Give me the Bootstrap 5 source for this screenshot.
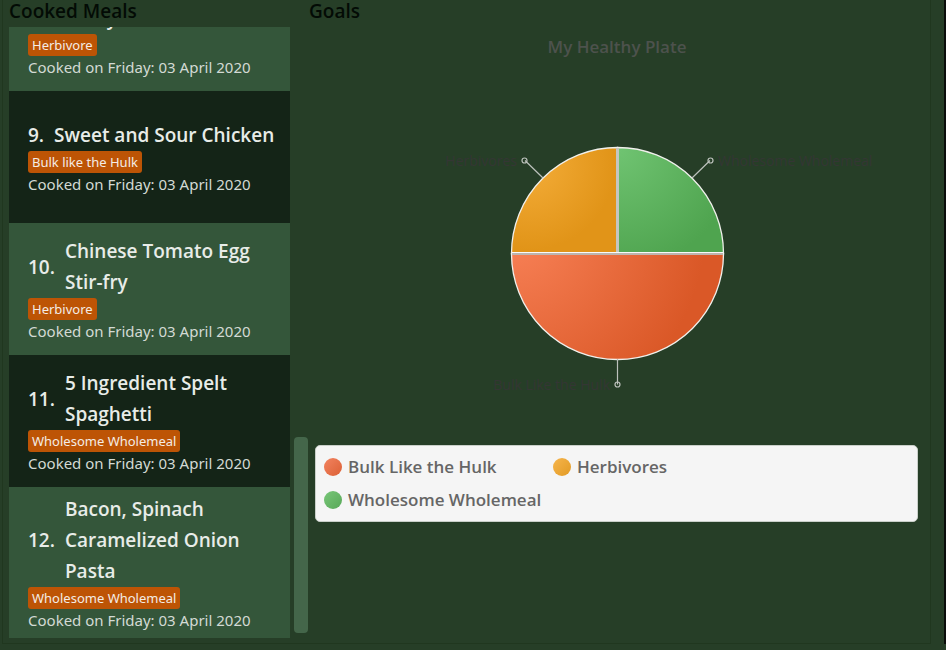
<!DOCTYPE html>
<html lang="en">
<head>
<meta charset="utf-8">
<meta name="viewport" content="width=device-width, initial-scale=1">
<title>Cooked Meals and Goals</title>
<link href="https://cdn.jsdelivr.net/npm/bootstrap@5.3.0/dist/css/bootstrap.min.css" rel="stylesheet">
<style>
body { background: #263e27; font-family: "Segoe UI", "Open Sans", "Noto Sans", sans-serif; border-right: 2px solid #0a0d0a; }
.board { height: calc(100vh - 6px); margin: 0 13px 0 2px; padding: 0 5px 5px 6px; border: 1px solid #20371f; border-top: 0; display: grid; grid-template-columns: 300px minmax(0, 1fr); }
.section-title { font-size: 19px; line-height: 22px; font-weight: 600; color: #030b05; margin: 0 0 5px; }
.meals { list-style: none; justify-content: flex-end; }
.meal { min-height: 132px; padding: 7px 6px 6px 19px; background: #34563a; color: #e8ece8; flex-shrink: 0; }
.meal:nth-child(even) { background: #142417; }
.meal-name { font-size: 19px; line-height: 31px; font-weight: 600; gap: 10px; }
.tag { background: #bd5405; color: #f4ece6; font-family: "Segoe UI", "Noto Sans", sans-serif; font-size: 13px; line-height: 22px; padding: 0 4px; border-radius: 3px; }
.cooked { font-family: "Segoe UI", "Noto Sans", sans-serif; font-size: 15px; line-height: 23px; color: #d3dad4; }
.thumb { width: 14px; height: 32%; margin: 0 1px 5px 4px; border-radius: 4px; background: #44664a; }
.chart-title { font-size: 17px; line-height: 24px; font-weight: 600; color: #4d524d; margin: 13px 0 0; }
.chart { height: 386px; overflow: visible; }
.chart text { font-size: 14px; fill: #343634; }
.legend-box { margin: 0 7px 0 6px; padding: 4px 8px 5px; background: #f5f5f5; border: 1px solid #c9cfc9; border-radius: 5px; color: #666; font-size: 17px; font-weight: 600; }
.legend-entry { flex: 0 0 229px; height: 33px; gap: 6px; }
.dot { width: 18px; height: 18px; border-radius: 50%; flex: none; }
.dot-hulk { background: linear-gradient(135deg, #f28360, #dc6035); }
.dot-herb { background: linear-gradient(135deg, #f6b54c, #e29a24); }
.dot-whole { background: linear-gradient(135deg, #78c678, #58a858); }
</style>
</head>
<body>
<main class="board">
  <section class="d-flex flex-column h-100 overflow-hidden">
    <h2 class="section-title">Cooked Meals</h2>
    <div class="d-flex flex-grow-1 overflow-hidden">
      <ol class="meals d-flex flex-column flex-grow-1 overflow-hidden p-0 m-0">
        <li class="meal d-flex flex-column justify-content-center align-items-start">
          <div class="meal-name d-flex align-items-center"><span>8.</span><span>Vegetable<br>Stir-fry</span></div>
          <span class="tag">Herbivore</span><span class="cooked">Cooked on Friday: 03 April 2020</span>
        </li>
        <li class="meal d-flex flex-column justify-content-center align-items-start">
          <div class="meal-name d-flex align-items-center"><span>9.</span><span>Sweet and Sour Chicken</span></div>
          <span class="tag">Bulk like the Hulk</span><span class="cooked">Cooked on Friday: 03 April 2020</span>
        </li>
        <li class="meal d-flex flex-column justify-content-center align-items-start">
          <div class="meal-name d-flex align-items-center"><span>10.</span><span>Chinese Tomato Egg Stir-fry</span></div>
          <span class="tag">Herbivore</span><span class="cooked">Cooked on Friday: 03 April 2020</span>
        </li>
        <li class="meal d-flex flex-column justify-content-center align-items-start">
          <div class="meal-name d-flex align-items-center"><span>11.</span><span>5 Ingredient Spelt Spaghetti</span></div>
          <span class="tag">Wholesome Wholemeal</span><span class="cooked">Cooked on Friday: 03 April 2020</span>
        </li>
        <li class="meal d-flex flex-column justify-content-center align-items-start">
          <div class="meal-name d-flex align-items-center"><span>12.</span><span>Bacon, Spinach Caramelized Onion Pasta</span></div>
          <span class="tag">Wholesome Wholemeal</span><span class="cooked">Cooked on Friday: 03 April 2020</span>
        </li>
      </ol>
      <div class="thumb align-self-end flex-shrink-0" aria-hidden="true"></div>
    </div>
  </section>
  <section>
    <h2 class="section-title">Goals</h2>
    <h3 class="chart-title text-center">My Healthy Plate</h3>
    <svg class="chart d-block w-100" viewBox="309 59 616 386" role="img" aria-label="My Healthy Plate pie chart">
      <defs>
        <radialGradient id="gHulk" gradientUnits="userSpaceOnUse" cx="512" cy="230" r="215"><stop offset="0" stop-color="#f98258"/><stop offset=".9" stop-color="#da5827"/></radialGradient>
        <radialGradient id="gHerb" gradientUnits="userSpaceOnUse" cx="530" cy="165" r="100"><stop offset="0" stop-color="#f3ac38"/><stop offset=".85" stop-color="#e19418"/></radialGradient>
        <radialGradient id="gWhole" gradientUnits="userSpaceOnUse" cx="617" cy="148" r="135"><stop offset="0" stop-color="#70c472"/><stop offset=".9" stop-color="#4fa44f"/></radialGradient>
      </defs>
      <g stroke="#f0f0ec" stroke-width="1.300">
        <path d="M617.5 253.5V147.5A106 106 0 0 1 723.5 253.5Z" fill="url(#gWhole)"/>
        <path d="M617.5 253.5H723.5A106 106 0 0 1 511.5 253.5Z" fill="url(#gHulk)"/>
        <path d="M617.5 253.5H511.5A106 106 0 0 1 617.5 147.5Z" fill="url(#gHerb)"/>
      </g>
      <path d="M617.5 148V253" stroke="#c4c6c1" stroke-width="3"/>
      <path d="M512 254H723" stroke="#bdb5ae" stroke-width="2"/>
      <path d="M512 252.5H723" stroke="#fafafa" stroke-width="1"/>
      <g stroke="#bcc1bc" stroke-width="1.2" fill="none">
        <path d="M543 178L525 160.5M692 178L710 160.5M617.5 359V384.5"/>
        <circle cx="524.5" cy="160.5" r="2.5"/><circle cx="710.5" cy="160.5" r="2.5"/><circle cx="617.5" cy="384.5" r="2.5"/>
      </g>
      <text x="517" y="166" text-anchor="end">Herbivores</text>
      <text x="718" y="166">Wholesome Wholemeal</text>
      <text x="610" y="390" text-anchor="end">Bulk Like the Hulk</text>
    </svg>
    <div class="legend-box d-flex flex-wrap">
      <div class="legend-entry d-flex align-items-center"><span class="dot dot-hulk"></span>Bulk Like the Hulk</div>
      <div class="legend-entry d-flex align-items-center"><span class="dot dot-herb"></span>Herbivores</div>
      <div class="legend-entry d-flex align-items-center"><span class="dot dot-whole"></span>Wholesome Wholemeal</div>
    </div>
  </section>
</main>
<script src="https://cdn.jsdelivr.net/npm/bootstrap@5.3.0/dist/js/bootstrap.bundle.min.js"></script>
</body>
</html>
